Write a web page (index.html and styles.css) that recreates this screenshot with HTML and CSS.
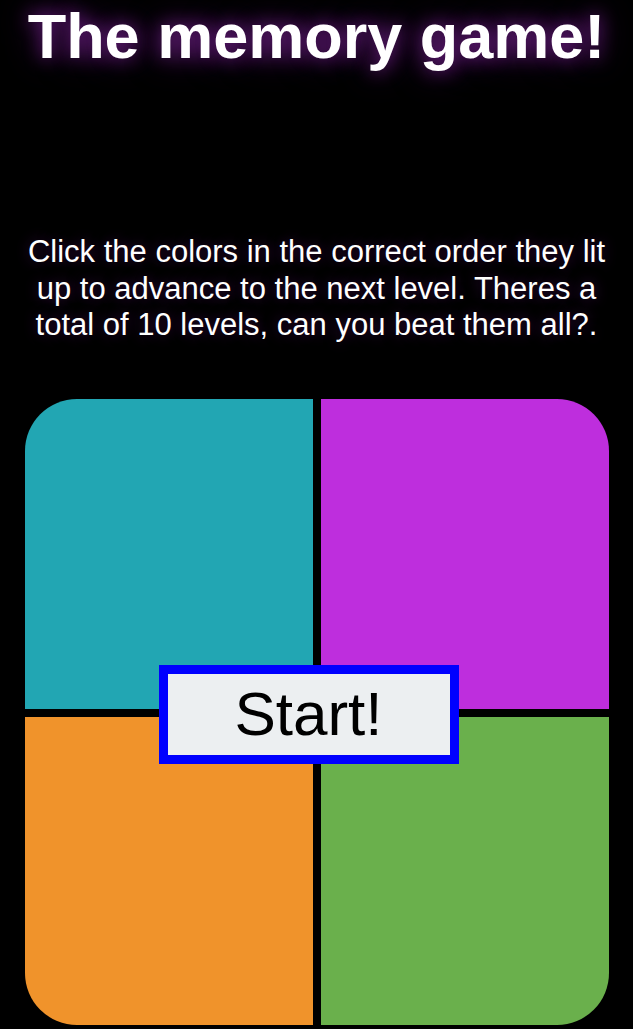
FILE: index.html
```html
<!DOCTYPE html>
<html>
<head>
<meta charset="utf-8">
<link rel="stylesheet" href="styles.css">
</head>
<body>
<h1 class="title">The memory game!</h1>
<p class="intro">Click the colors in the correct order they lit up to advance to the next level. Theres a total of 10 levels, can you beat them all?.</p>
<div class="board">
  <div class="pad pad-teal"></div>
  <div class="pad pad-purple"></div>
  <div class="pad pad-orange"></div>
  <div class="pad pad-green"></div>
  <button class="start">Start!</button>
</div>
</body>
</html>
```
FILE: styles.css
```css
html, body {
  margin: 0;
  padding: 0;
  background: #000;
  font-family: "Liberation Sans", Arial, sans-serif;
  overflow: hidden;
}
.title {
  margin: 0;
  padding-top: 0;
  text-align: center;
  color: #fff;
  font-size: 63px;
  font-weight: bold;
  line-height: 72px;
  text-shadow: 0 0 18px #6e1f84, 0 0 34px #45105a;
}
.intro {
  margin: 162px 0 0;
  padding: 0 8px;
  text-align: center;
  color: #fff;
  font-size: 31px;
  line-height: 36.5px;
  text-shadow: 0 0 14px #3a0f48;
}
.board {
  position: relative;
  width: 584px;
  margin: 55px auto 0;
  display: grid;
  grid-template-columns: 288px 288px;
  grid-template-rows: 310px 308px;
  gap: 8px;
}
.pad-teal { background: #22a6b3; border-top-left-radius: 52px; }
.pad-purple { background: #be2edd; border-top-right-radius: 52px; }
.pad-orange { background: #f0932b; border-bottom-left-radius: 52px; }
.pad-green { background: #6ab04c; border-bottom-right-radius: 52px; }
.start {
  position: absolute;
  left: 134px;
  top: 266px;
  width: 300px;
  height: 99px;
  box-sizing: border-box;
  border: 9px solid #0000ff;
  background: #eceff1;
  color: #000;
  font-family: "Liberation Sans", Arial, sans-serif;
  font-size: 62px;
  padding: 0;
  line-height: 1;
}
```
